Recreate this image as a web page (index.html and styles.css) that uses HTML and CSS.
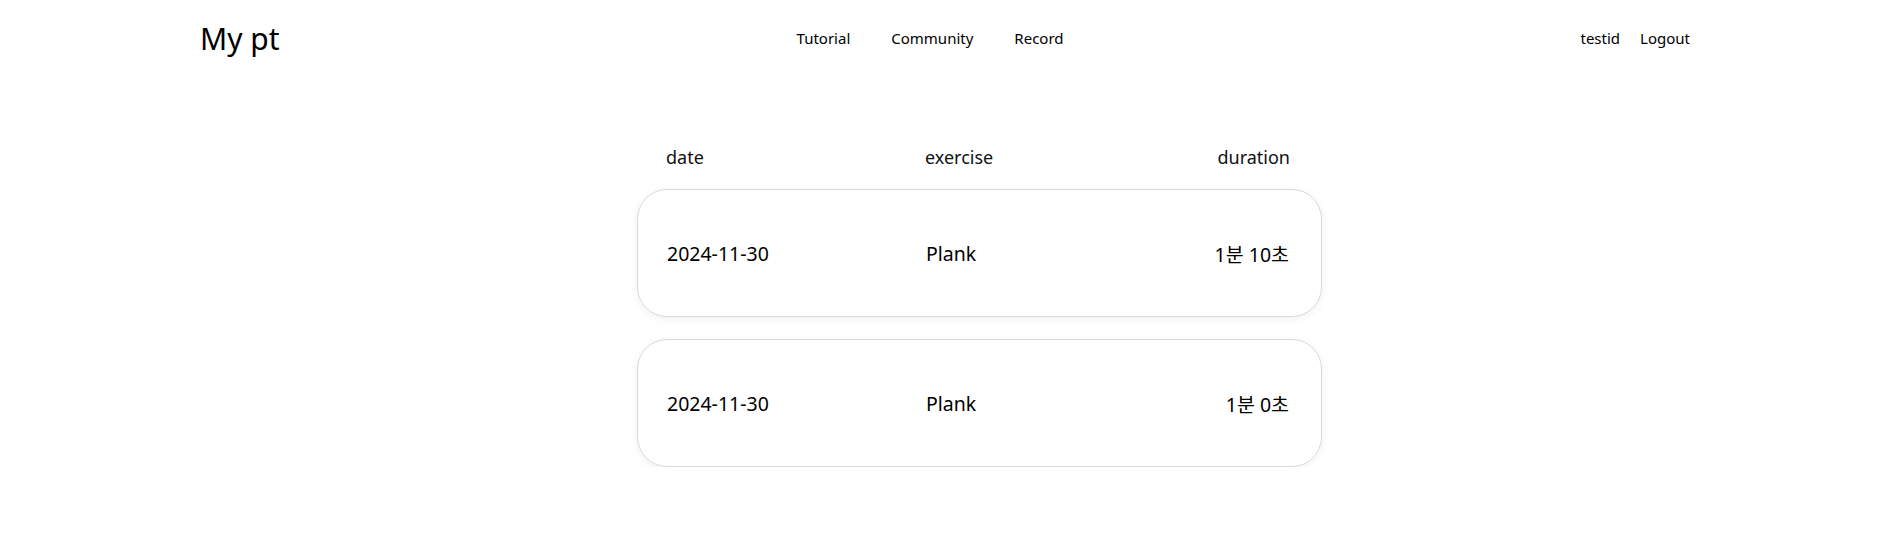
FILE: index.html
```html
<!DOCTYPE html>
<html lang="ko">
<head>
<meta charset="utf-8">
<title>My pt</title>
<link rel="stylesheet" href="styles.css">
</head>
<body>
<header class="topbar">
  <div class="logo">My pt</div>
  <nav class="menu">
    <a class="menu-link" href="#">Tutorial</a>
    <a class="menu-link" href="#">Community</a>
    <a class="menu-link" href="#">Record</a>
  </nav>
  <div class="user">
    <span class="user-id">testid</span>
    <a class="menu-link" href="#">Logout</a>
  </div>
</header>
<main class="records">
  <div class="record-head">
    <span>date</span>
    <span>exercise</span>
    <span class="right">duration</span>
  </div>
  <div class="record-card">
    <span>2024-11-30</span>
    <span>Plank</span>
    <span class="right">1분 10초</span>
  </div>
  <div class="record-card">
    <span>2024-11-30</span>
    <span>Plank</span>
    <span class="right">1분 0초</span>
  </div>
</main>
</body>
</html>
```

FILE: styles.css
```css
* { box-sizing: border-box; }
body {
  margin: 0;
  background: #fff;
  color: #000;
  font-family: "Noto Sans", "Noto Sans CJK KR", sans-serif;
}
.topbar {
  display: flex;
  align-items: center;
  justify-content: space-between;
  height: 76px;
  padding: 0 208px 0 200px;
}
.logo {
  font-size: 30px;
}
.menu {
  display: flex;
  gap: 41px;
}
.menu-link {
  color: #000;
  text-decoration: none;
  font-size: 15px;
}
.user {
  display: flex;
  gap: 20px;
  font-size: 15px;
}
.records {
  width: 685px;
  margin: 69px 0 0 637px;
  display: flex;
  flex-direction: column;
  gap: 22px;
}
.record-head,
.record-card {
  display: grid;
  grid-template-columns: 259px 1fr auto;
  padding: 0 32px 0 29px;
  font-size: 18px;
}
.record-head {
  margin-bottom: -2px;
  color: #111;
}
.record-card {
  height: 128px;
  align-items: center;
  font-size: 19.5px;
  border: 1px solid #d8d8d8;
  border-radius: 30px;
  box-shadow: 0 2px 8px rgba(0,0,0,0.06);
}
.right { text-align: right; }
```
